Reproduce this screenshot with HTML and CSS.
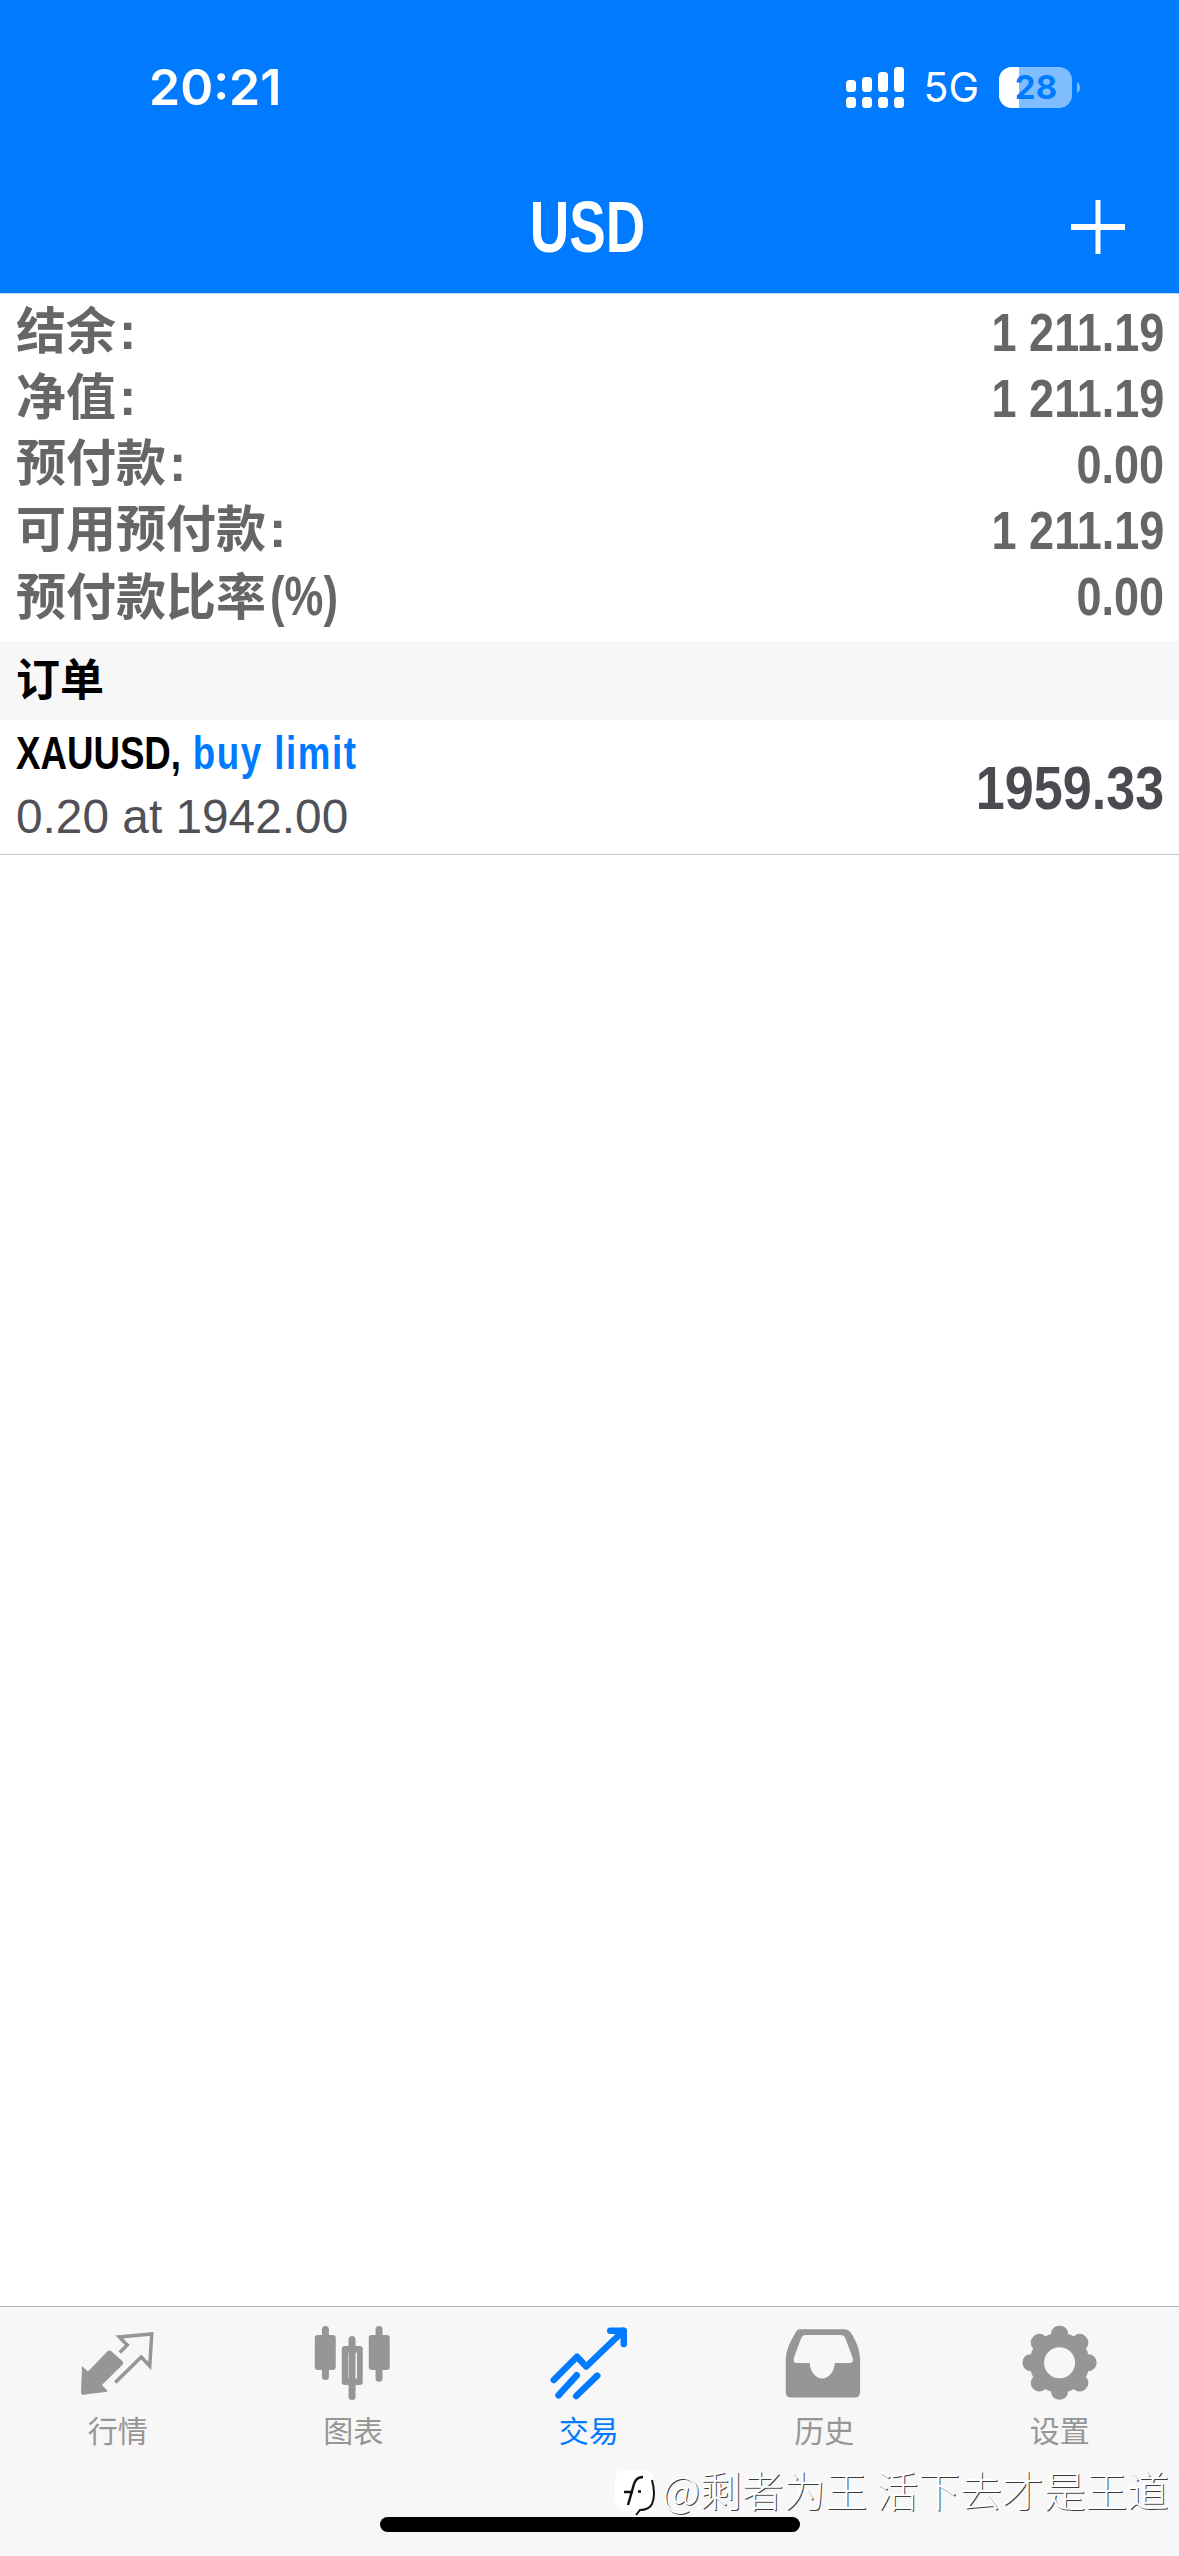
FILE: index.html
```html
<!DOCTYPE html>
<html lang="zh-CN">
<head>
<meta charset="utf-8">
<title>USD</title>
<link rel="stylesheet" href="styles.css">
</head>
<body>
<div class="page">
  <header class="header">
    <div class="status">
      <span class="time">20:21</span>
      <div class="status-right">
        <svg class="signal" width="58" height="41" viewBox="0 0 58 41" fill="#fff">
          <rect x="0" y="13" width="10" height="12" rx="3.5"/><rect x="16" y="10" width="10" height="15" rx="3.5"/><rect x="32" y="5" width="10" height="20" rx="3.5"/><rect x="48" y="0" width="10" height="25" rx="3.5"/>
          <rect x="0" y="30" width="10" height="11" rx="3.5"/><rect x="16" y="30" width="10" height="11" rx="3.5"/><rect x="32" y="30" width="10" height="11" rx="3.5"/><rect x="48" y="30" width="10" height="11" rx="3.5"/>
        </svg>
        <span class="net">5G</span>
        <svg class="battery" width="82" height="41" viewBox="0 0 82 41">
          <defs><clipPath id="batt"><rect x="0" y="0" width="20" height="41"/></clipPath></defs>
          <rect x="0" y="0" width="73" height="41" rx="13" fill="#fff" fill-opacity=".5"/>
          <rect x="0" y="0" width="73" height="41" rx="13" fill="#fff" clip-path="url(#batt)"/>
          <path d="M78 15c2 1 3 3 3 5.500s-1 4.500-3 5.500z" fill="#fff" fill-opacity=".5"/>
          <text class="batt-num" x="37" y="32" text-anchor="middle">28</text>
        </svg>
      </div>
    </div>
    <div class="nav">
      <h1 class="title">USD</h1>
      <svg class="plus" width="54" height="54" viewBox="0 0 54 54" fill="#fff"><rect x="24.500" y="0" width="5" height="54"/><rect x="0" y="24" width="54" height="6"/></svg>
    </div>
  </header>

  <main class="main">
    <section class="summary">
      <div class="row"><span class="label">结余<span class="colon">:</span></span><span class="value">1 211.19</span></div>
      <div class="row"><span class="label">净值<span class="colon">:</span></span><span class="value">1 211.19</span></div>
      <div class="row"><span class="label">预付款<span class="colon">:</span></span><span class="value">0.00</span></div>
      <div class="row"><span class="label">可用预付款<span class="colon">:</span></span><span class="value">1 211.19</span></div>
      <div class="row"><span class="label">预付款比率<span class="paren">(%)</span></span><span class="value">0.00</span></div>
    </section>
    <div class="section-head">订单</div>
    <div class="order">
      <div class="order-left">
        <div class="order-title"><span class="symbol">XAUUSD,</span> <span class="side">buy limit</span></div>
        <div class="order-sub">0.20 at 1942.00</div>
      </div>
      <div class="order-price">1959.33</div>
    </div>
  </main>

  <nav class="tabbar">
    <div class="tab">
      <svg class="tab-icon" width="100" height="90" viewBox="-2.250 0 100 90">
        <path d="M11.700 46L17.700 51.500L37 31.500Q39 29.500 41 31.200L52 41Q54 43 52 45L31.700 65L37.300 70.700Q37.500 71.500 36.500 71.700L13 74.700Q10.800 75 10.800 72.500Z" fill="#969696"/>
        <path d="M45 62.500L71 37L79.500 46L81.500 14L49 17L57 25L49.500 32.500" fill="none" stroke="#969696" stroke-width="3.500"/>
      </svg>
      <span class="tab-label">行情</span>
    </div>
    <div class="tab">
      <svg class="tab-icon" width="100" height="90" viewBox="-1.750 0 100 90" fill="#969696">
        <rect x="17.200" y="6" width="7" height="54" rx="3.500"/><rect x="10" y="15" width="21" height="35" rx="3"/>
        <rect x="43.800" y="16" width="7" height="64" rx="3.500"/>
        <path fill-rule="evenodd" d="M40 26H55Q58 26 58 29V62Q58 65 55 65H40Q37 65 37 62V29Q37 26 40 26ZM45 32.300Q43.300 32.300 43.300 34V57.300Q43.300 59 45 59H50.600Q52.300 59 52.300 57.300V34Q52.300 32.300 50.600 32.300Z"/>
        <rect x="70.800" y="6" width="7" height="55.700" rx="3.500"/><rect x="64" y="15" width="21" height="35" rx="3"/>
      </svg>
      <span class="tab-label">图表</span>
    </div>
    <div class="tab tab-active">
      <svg class="tab-icon" width="100" height="90" viewBox="-1.250 0 100 90" fill="none" stroke="#007aff" stroke-width="6.500" stroke-linecap="round" stroke-linejoin="round">
        <path d="M13.500 60L36.700 36.700L46 46.500L83 11"/>
        <path d="M70 10.700H83.500V24"/>
        <path d="M18.300 75.300L36.500 55.300"/>
        <path d="M36 76L57 55.700"/>
      </svg>
      <span class="tab-label">交易</span>
    </div>
    <div class="tab">
      <svg class="tab-icon" width="100" height="90" viewBox="-.75 0 100 90" fill="#969696">
        <path fill-rule="evenodd" d="M25 9.300H70Q74 9.300 77 14C83 24 85.300 32 85.300 40V72Q85.300 77.500 80 77.500H16Q11 77.500 11 72V40C11 32 14 24 20 14Q22 9.300 25 9.300ZM30 15Q28 15 26.500 18L19 38Q18 43 22 43H35C35 51 41 58.500 47.500 58.500C54 58.500 60 51 60 43H75Q79 43 78 38L70.500 18Q69 15 66 15Z"/>
      </svg>
      <span class="tab-label">历史</span>
    </div>
    <div class="tab">
      <svg class="tab-icon" width="100" height="90" viewBox="-.25 0 100 90">
        <g transform="translate(49.300 42.700)" fill="#969696">
          <circle r="30"/>
          <rect x="-8.500" y="-37" width="17" height="16" rx="8"/>
          <rect x="-8.500" y="-37" width="17" height="16" rx="8" transform="rotate(45)"/>
          <rect x="-8.500" y="-37" width="17" height="16" rx="8" transform="rotate(90)"/>
          <rect x="-8.500" y="-37" width="17" height="16" rx="8" transform="rotate(135)"/>
          <rect x="-8.500" y="-37" width="17" height="16" rx="8" transform="rotate(180)"/>
          <rect x="-8.500" y="-37" width="17" height="16" rx="8" transform="rotate(225)"/>
          <rect x="-8.500" y="-37" width="17" height="16" rx="8" transform="rotate(270)"/>
          <rect x="-8.500" y="-37" width="17" height="16" rx="8" transform="rotate(315)"/>
          <circle r="15.500" fill="#f7f7f7"/>
        </g>
      </svg>
      <span class="tab-label">设置</span>
    </div>
    <div class="watermark">
      <svg class="wm-logo" width="42" height="50" viewBox="0 0 42 50">
        <path d="M10 2H28Q38 2 39 14V30Q39 42 25 43L21 47L18 43H10Q0 43 0 30V12Q0 2 10 2Z" fill="#fff"/>
        <path d="M37 12Q41 27 37 36Q34 42 25 42L21 47" fill="none" stroke="#111" stroke-width="2"/>
        <path d="M28 9Q21 9 19 16L13 37M9 24H18M23 23.500H26" fill="none" stroke="#111" stroke-width="2.500"/>
      </svg>
      <span class="wm-text">@剩者为王 活下去才是王道</span>
    </div>
    <div class="home-indicator"></div>
  </nav>
</div>
</body>
</html>
```
FILE: styles.css
```css
* { box-sizing: border-box; }
html, body { margin: 0; padding: 0; background: #fff; }
.page {
  width: 1179px;
  height: 2556px;
  display: flex;
  flex-direction: column;
  overflow: hidden;
  font-family: "Liberation Sans", "Noto Sans CJK SC", sans-serif;
}
.header {
  background: #007aff;
  height: 294px;
  border-bottom: 1px solid #c4d8ee;
  color: #fff;
  display: flex;
  flex-direction: column;
}
.status {
  height: 174px;
  padding: 0 98px 0 149px;
  display: flex;
  justify-content: space-between;
  align-items: center;
}
.time { font-family: Inter, sans-serif; font-weight: 600; font-size: 50px; line-height: 1; }
.status-right { display: flex; align-items: center; }
.net { font-family: Inter, sans-serif; font-weight: 400; font-size: 41px; line-height: 1; margin: 0 20px 0 19px; }
.batt-num { font-family: Inter, sans-serif; font-weight: 700; font-size: 33px; fill: #007aff; }
.nav {
  flex: 1;
  display: grid;
  grid-template-columns: 54px 1fr 54px;
  align-items: center;
  padding: 0 54px 13px;
}
.title {
  grid-column: 2;
  margin: 0;
  text-align: center;
  font-family: "Liberation Sans", sans-serif;
  font-weight: 700;
  font-size: 72px;
  line-height: 1;
  transform: translateX(-2px) scaleX(.76);
}
.plus { grid-column: 3; }
.main { flex: 1; }
.summary { padding: 5px 0 12px; }
.row {
  height: 66px;
  padding: 0 15px 0 16px;
  display: flex;
  justify-content: space-between;
  align-items: center;
  color: #666;
  font-weight: 700;
}
.label {
  font-family: "Noto Sans CJK SC", sans-serif;
  font-size: 50px;
  line-height: 60px;
  margin-bottom: 6px;
}
.colon { margin-left: 3px; font-family: "Liberation Sans", sans-serif; font-size: 52px; }
.paren {
  display: inline-block;
  margin-left: 4px;
  font-family: "Liberation Sans", sans-serif;
  font-size: 56px;
  line-height: 50px;
  transform: scaleX(.78);
  transform-origin: left center;
}
.value {
  font-family: "Liberation Sans", sans-serif;
  font-size: 53px;
  transform: scaleX(.85);
  transform-origin: right center;
}
.section-head {
  height: 79px;
  background: #f7f7f7;
  padding: 0 16px 8px;
  display: flex;
  align-items: center;
  color: #000;
  font-weight: 700;
  font-size: 44px;
  font-family: "Noto Sans CJK SC", sans-serif;
}
.order {
  height: 135px;
  padding: 0 15px 0 16px;
  border-bottom: 1px solid #c8c8c8;
  display: flex;
  justify-content: space-between;
  align-items: center;
}
.order-left { padding-bottom: 4px; }
.order-title {
  font-family: "Liberation Sans", sans-serif;
  font-weight: 700;
  font-size: 47px;
  line-height: 64px;
  white-space: nowrap;
  transform: scaleX(.78);
  transform-origin: left center;
}
.symbol { color: #000; }
.side { color: #007aff; margin-left: 2px; letter-spacing: 2px; }
.order-sub { font-size: 47.800px; line-height: 64px; color: #505056; }
.order-price {
  font-family: "Liberation Sans", sans-serif;
  font-weight: 700;
  font-size: 62px;
  color: #4a4a50;
  transform: scaleX(.84);
  transform-origin: right center;
}
.tabbar {
  position: relative;
  height: 250px;
  background: #f7f7f7;
  border-top: 1px solid #b4b4b4;
  display: grid;
  grid-template-columns: repeat(5, 235.5px);
  align-items: start;
}
.tab {
  padding-top: 13px;
  display: flex;
  flex-direction: column;
  align-items: center;
  color: #969696;
}
.tab-icon { display: block; }
.tab-label {
  margin-top: 1px;
  font-family: "Noto Sans CJK SC", sans-serif;
  font-weight: 400;
  font-size: 30px;
  line-height: 36px;
}
.tab-active { color: #007aff; }
.watermark {
  position: absolute;
  left: 615px;
  top: 161px;
  display: flex;
  align-items: flex-start;
  gap: 5px;
}
.wm-text {
  margin-top: -4px;
  font-family: "Noto Sans CJK SC", sans-serif;
  font-weight: 300;
  font-size: 41.800px;
  line-height: 50px;
  white-space: nowrap;
  color: #fff;
  text-shadow: 1px 1px 0 rgba(0, 0, 0, .75);
}
.home-indicator {
  position: absolute;
  left: 380px;
  top: 210px;
  width: 420px;
  height: 15px;
  border-radius: 8px;
  background: #000;
}
```
